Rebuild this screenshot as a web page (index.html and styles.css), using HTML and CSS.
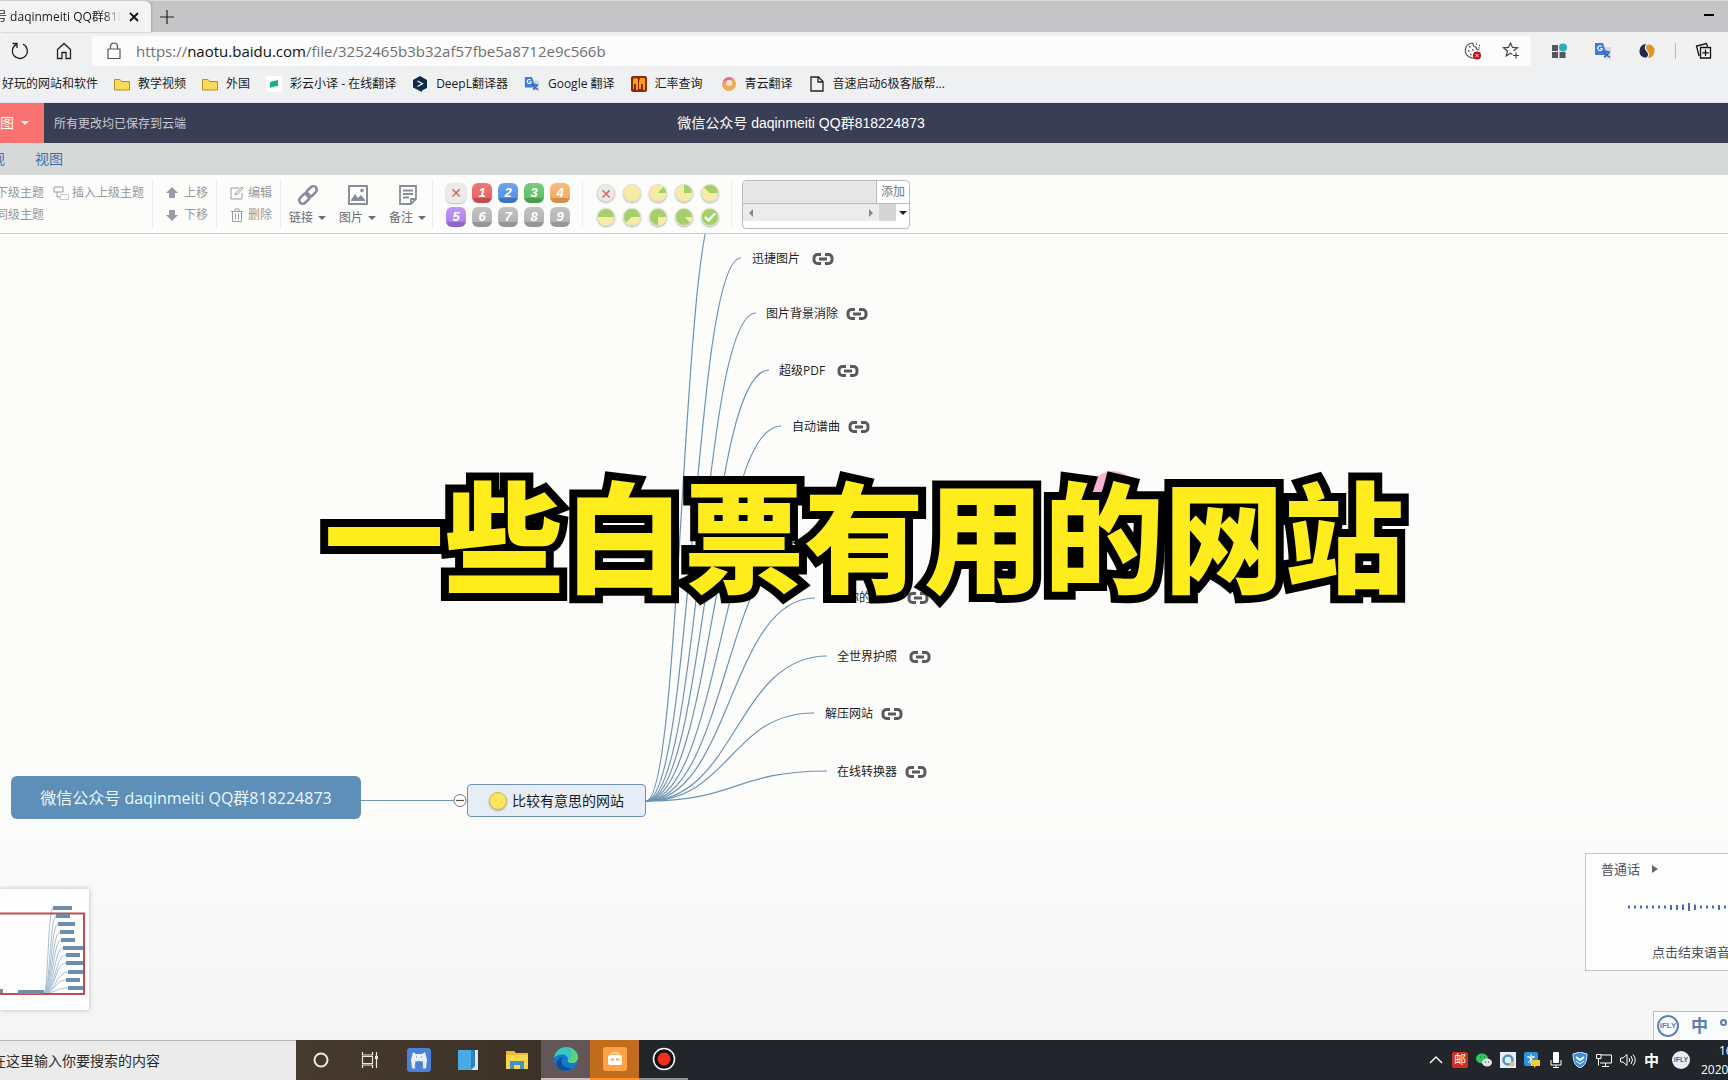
FILE: index.html
```html
<!DOCTYPE html>
<html lang="zh-CN">
<head>
<meta charset="utf-8">
<title>微信公众号 daqinmeiti QQ群818224873</title>
<link rel="stylesheet" href="styles.css">
</head>
<body>
<svg class="defs" aria-hidden="true">
  <symbol id="i-link" viewBox="0 0 22 12"><path d="M9 1.500H5.500A3.500 3.500 0 0 0 2 5v2a3.500 3.500 0 0 0 3.500 3.500H9M13 1.500h3.500A3.500 3.500 0 0 1 20 5v2a3.500 3.500 0 0 1-3.500 3.500H13M7 6h8" fill="none" stroke="#5a5a5c" stroke-width="3"/></symbol>
  <symbol id="i-folder" viewBox="0 0 16 16"><path d="M.5 3.500h5.500l1.500 2h8v8.500H.5z" fill="#fbd95b" stroke="#b78f1e"/></symbol>
  <symbol id="i-gt" viewBox="0 0 18 18"><path d="M7 5h10v12h-6z" fill="#d5d8dc"/><path d="M1 1h8l4 12H1z" fill="#3f7bdc"/><path d="M8.500 6.500H6.200M8.300 6.500a2.300 2.300 0 1 1-.8-2" fill="none" stroke="#fff" stroke-width="1.200"/><path d="M9 10h7M12.500 8.500V10M15 10c-.8 2.500-3 4-5 5M11 11c1 2 3 3.500 5 4" stroke="#3765b5" stroke-width="1.500" fill="none"/></symbol>
</svg>

<header class="browser">
  <div class="tabstrip">
    <div class="tab"><span class="tab-title">号 daqinmeiti QQ群818</span>
      <button class="plain" aria-label="关闭标签页"><svg width="10" height="10" viewBox="0 0 10 10"><path d="M1 1l8 8M9 1L1 9" stroke="#111" stroke-width="1.800"/></svg></button></div>
    <button class="plain newtab" aria-label="新建标签页"><svg width="14" height="14" viewBox="0 0 14 14"><path d="M7 0v14M0 7h14" stroke="#222" stroke-width="1.200"/></svg></button>
    <button class="plain minimize" aria-label="最小化"><svg width="10" height="2"><path d="M0 1h10" stroke="#000" stroke-width="2"/></svg></button>
  </div>
  <div class="addressbar">
    <button class="plain nav-btn" aria-label="刷新"><svg width="18" height="18" viewBox="0 0 18 18"><path d="M5.500 2.300A7.500 7.500 0 1 0 12 2.200M1.500 1.500h4.500V6" fill="none" stroke="#222" stroke-width="1.300"/></svg></button>
    <button class="plain nav-btn" aria-label="主页"><svg width="16" height="18" viewBox="0 0 16 18"><path d="M1.500 7.500L8 1.500l6.500 6v9H10v-6H6v6H1.500z" fill="none" stroke="#222" stroke-width="1.300"/></svg></button>
    <div class="urlbox">
      <svg width="14" height="18" viewBox="0 0 14 18"><path d="M1 7h12v9.500H1zM3.500 7V4.500a3.500 3.500 0 0 1 7 0V7" fill="none" stroke="#555" stroke-width="1.200"/></svg>
      <a class="url" href="#">https://<b>naotu.baidu.com</b>/file/3252465b3b32af57fbe5a8712e9c566b</a>
      <button class="plain" aria-label="Cookie"><svg width="18" height="18" viewBox="0 0 18 18"><path d="M9 1a7.500 7.500 0 1 0 7 9.500M9 1c0 3 1 4 3 4 0 2 1 3 3.500 3" fill="none" stroke="#555" stroke-width="1.200"/><path d="M5 5h1.500M4 9h1.500M8 8h1.500M6 12.500h1.500M12 2h1M15 3.500h1M14.500 6h1" stroke="#555" stroke-width="1.500"/><circle cx="13" cy="13.500" r="4" fill="#c2151e"/><path d="M11.700 12.200l2.600 2.600M14.300 12.200l-2.600 2.600" stroke="#fff"/></svg></button>
      <button class="plain" aria-label="收藏"><svg width="18" height="18" viewBox="0 0 18 18"><path d="M10.500 12.500L8.500 11.300 4.200 14l1.200-5L1.500 5.800l5-.4 2-4.400 2 4.400 5 .4-3.900 3.200M14 10.500v6M11 13.500h6" fill="none" stroke="#444" stroke-width="1.200"/></svg></button>
    </div>
    <div class="extensions">
      <button class="plain" aria-label="应用"><svg width="16" height="16" viewBox="0 0 16 16"><path d="M1 2h6v6H1zM1 9h6v6H1zM8.500 9h6v6h-6z" fill="#55565b"/><circle cx="12" cy="4.500" r="4" fill="#2cabc4"/></svg></button>
      <button class="plain" aria-label="翻译"><svg width="18" height="18"><use href="#i-gt"/></svg></button>
      <button class="plain" aria-label="扩展"><svg width="16" height="16" viewBox="0 0 16 16"><path d="M7 1A7 7 0 0 0 5 14.500c4 .5 5-3 3-5.500-2.500-3-3-5-1-8z" fill="#23284e"/><path d="M9 15A7 7 0 0 0 11 1.500c-4-.5-5 3-3 5.500 2.500 3 3 5 1 8z" fill="#e19424"/></svg></button>
      <span class="vline"></span>
      <button class="plain" aria-label="集锦"><svg width="18" height="18" viewBox="0 0 18 18"><path d="M5.500 5.500h10v10.500h-10zM10.500 7.500v6.500M7.300 10.800h6.500M4 14L1.500 4l10-2.500 1 3" fill="none" stroke="#111" stroke-width="1.300"/></svg></button>
    </div>
  </div>
  <nav class="bookmarks">
    <a href="#">好玩的网站和软件</a>
    <a href="#"><svg><use href="#i-folder"/></svg>教学视频</a>
    <a href="#"><svg><use href="#i-folder"/></svg>外国</a>
    <a href="#"><svg viewBox="0 0 16 16"><rect width="16" height="16" rx="3" fill="#fff"/><path d="M4 6l8-2v6l-6 1-2 1z" fill="#19b37c"/></svg>彩云小译 - 在线翻译</a>
    <a href="#"><svg viewBox="0 0 16 16"><path d="M8 0l7 4v8l-5 2.500V16L1 11.500V4z" fill="#0f2b46"/><path d="M5.500 5l5 2.800-5 2.700" fill="none" stroke="#fff" stroke-width="1.200"/></svg>DeepL翻译器</a>
    <a href="#"><svg viewBox="0 0 18 18"><use href="#i-gt" width="18" height="18"/></svg>Google 翻译</a>
    <a href="#"><svg viewBox="0 0 16 16"><rect width="16" height="16" rx="2" fill="#8c2a05"/><path d="M2 3q3-2 5 0v11H5V8H3v5H2zM9 2h4q2 1 1 4v8h-2V8h-2v5H8V6z" fill="#ff9a1d"/></svg>汇率查询</a>
    <a class="wide" href="#"><svg viewBox="0 0 16 16"><circle cx="8" cy="8" r="7" fill="#ebab5b"/><path d="M2 5a7 7 0 0 1 11-2c-4 0-5 4-11 2z" fill="#df6d9e"/><circle cx="8" cy="7" r="3" fill="#f9e4ce"/></svg>青云翻译</a>
    <a href="#"><svg viewBox="0 0 16 16"><path d="M2 1h7.500L14 5.500V15H2zM9 1v5h5" fill="none" stroke="#222" stroke-width="1.300"/></svg>音速启动6极客版帮...</a>
  </nav>
</header>

<div class="appbar">
  <button class="menu-btn">脑图<i class="caret"></i></button>
  <span class="saved">所有更改均已保存到云端</span>
  <h1>微信公众号 daqinmeiti QQ群818224873</h1>
</div>
<nav class="app-tabs"><a href="#">外观</a><a href="#">视图</a></nav>

<div class="ribbon">
  <div class="group topics">
    <div class="stack"><button class="tool">下级主题</button><button class="tool">同级主题</button></div>
    <button class="tool"><svg width="16" height="14" viewBox="0 0 16 14"><path d="M1 1h9v5H1zM4 6v5h3" fill="none" stroke="#999ca3"/><path d="M7.500 8.500h8v5h-8z" fill="none" stroke="#999ca3" stroke-dasharray="1 1"/></svg>插入上级主题</button>
  </div>
  <div class="group stack moves">
    <button class="tool"><svg width="12" height="12" viewBox="0 0 12 12"><path d="M6 0l6 6H9v5H3V6H0z" fill="#999ca6"/></svg>上移</button>
    <button class="tool"><svg width="12" height="12" viewBox="0 0 12 12"><path d="M6 12l6-6H9V1H3v5H0z" fill="#999ca6"/></svg>下移</button>
  </div>
  <div class="group stack edits">
    <button class="tool"><svg width="14" height="14" viewBox="0 0 14 14"><path d="M9 2H1v11h11V7M5 9l1-2.500L12 1l1 1-5.500 6z" fill="none" stroke="#999ca3"/></svg>编辑</button>
    <button class="tool"><svg width="14" height="14" viewBox="0 0 14 14"><path d="M1 3.500h12M5 3V1h4v2M2.500 3.500v10h9v-10M5.500 5.500v6M8.500 5.500v6" fill="none" stroke="#999ca3"/></svg>删除</button>
  </div>
  <div class="group bigs">
    <button class="big"><svg width="22" height="22" viewBox="0 0 22 22"><g fill="none" stroke="#8a8e99" stroke-width="2.600" transform="rotate(-45 11 11)"><rect x="0" y="7.500" width="12" height="7" rx="3.500"/><rect x="10" y="7.500" width="12" height="7" rx="3.500"/></g></svg><span>链接<i class="caret"></i></span></button>
    <button class="big"><svg width="22" height="22" viewBox="0 0 22 22"><path d="M2 2h18v18H2z" fill="none" stroke="#8a8e99" stroke-width="2"/><path d="M4 16l4-6 3 4 3-3 4 5v1H4z" fill="#8a8e99"/><circle cx="15" cy="6.500" r="1.800" fill="#8a8e99"/></svg><span>图片<i class="caret"></i></span></button>
    <button class="big"><svg width="22" height="22" viewBox="0 0 22 22"><path d="M3 2h16v13l-5 5H3zM14 20v-5h5M6 6.500h10M6 10h10M6 13.500h6" fill="none" stroke="#8a8e99" stroke-width="1.800"/></svg><span>备注<i class="caret"></i></span></button>
  </div>
  <div class="group marks">
    <button class="pri none" aria-label="移除优先级">✕</button><button class="pri c1">1</button><button class="pri c2">2</button><button class="pri c3">3</button><button class="pri c4">4</button>
    <button class="pri c5">5</button><button class="pri">6</button><button class="pri">7</button><button class="pri">8</button><button class="pri">9</button>
  </div>
  <div class="group marks progress">
    <button class="prog none" aria-label="移除进度">✕</button><button class="prog p0" aria-label="未开始"></button><button class="prog p1" aria-label="1/8"></button><button class="prog p2" aria-label="2/8"></button><button class="prog p3" aria-label="3/8"></button>
    <button class="prog p4" aria-label="4/8"></button><button class="prog p5" aria-label="5/8"></button><button class="prog p6" aria-label="6/8"></button><button class="prog p7" aria-label="7/8"></button><button class="prog p8" aria-label="完成"><svg width="12" height="10" viewBox="0 0 12 10"><path d="M1 5l3.500 3.500L11 1.500" fill="none" stroke="#fff" stroke-width="2.400"/></svg></button>
  </div>
  <div class="resource">
    <div class="res-add"><input type="text" aria-label="资源"><button>添加</button></div>
    <div class="res-list"><div class="scroller"><i class="left"></i><i class="right"></i></div><span class="corner"></span><button class="plain" aria-label="展开"><i class="caret"></i></button></div>
  </div>
</div>

<main class="canvas">
  <svg class="edges" width="1000" height="806" viewBox="0 234 1000 806" aria-hidden="true">
    <g fill="none" stroke="#6e93b3" stroke-width="1.200">
      <path d="M646 801C682 801 682 200 719 200"/>
      <path d="M646 801C693 801 693 258 741 258"/>
      <path d="M646 801C701 801 701 313 756 313"/>
      <path d="M646 801C707 801 707 370 769 370"/>
      <path d="M646 801C713 801 713 426 781 426"/>
      <path d="M646 801C720 801 720 483 795 483"/>
      <path d="M646 801C726 801 726 540 806 540"/>
      <path d="M646 801C730 801 730 598 815 598"/>
      <path d="M646 801C736 801 736 656 827 656"/>
      <path d="M646 801C730 801 730 713 814 713"/>
      <path d="M646 801C736 801 736 771 827 771"/>
      <path d="M361 800.500H454"/>
      <circle cx="460" cy="800.500" r="6" fill="#fff" stroke="#777" stroke-width="1"/><path d="M456 800.500h8" stroke="#555"/>
    </g>
  </svg>
  <div class="node root">微信公众号 daqinmeiti QQ群818224873</div>
  <div class="node topic"><i class="dot"></i>比较有意思的网站</div>
  <div class="node leaf n1">迅捷图片<svg><use href="#i-link"/></svg></div>
  <div class="node leaf tight n2">图片背景消除<svg><use href="#i-link"/></svg></div>
  <div class="node leaf n3">超级PDF<svg><use href="#i-link"/></svg></div>
  <div class="node leaf tight n4">自动谱曲<svg><use href="#i-link"/></svg></div>
  <div class="node leaf n5">根据你的照片<svg><use href="#i-link"/></svg></div>
  <div class="node leaf n6">全世界护照<svg><use href="#i-link"/></svg></div>
  <div class="node leaf tight n7">解压网站<svg><use href="#i-link"/></svg></div>
  <div class="node leaf tight n8">在线转换器<svg><use href="#i-link"/></svg></div>
  <i class="pink"></i>

  <div class="minimap">
    <svg width="89" height="121" viewBox="0 889 89 121" aria-hidden="true">
      <g fill="none" stroke="#a9c0d2"><path d="M44 993C48 993 48 908 53 908M44 993C50 993 50 916 56 916M44 993C51 993 51 924 58 924M44 993C52 993 52 932 60 932M44 993C53 993 53 940 61 940M44 993C54 993 54 948 63 948M44 993C55 993 55 955 66 955M44 993C55 993 55 963 66 963M44 993C56 993 56 972 68 972M44 993C55 993 55 980 66 980M44 993C56 993 56 988 68 988"/></g>
      <path d="M0 913.500H84V994H0" fill="none" stroke="#bf4c54" stroke-width="2"/>
      <path d="M53 906h19v4H53zM56 914h14v4H56zM58 922h17v4H58zM60 930h14v4H60zM61 938h14v4H61zM63 946h20v4H63zM66 953h14v4H66zM66 961h17v4H66zM68 970h15v4H68zM66 978h14v4H66zM68 986h15v4H68zM18 990h26v4H18zM0 989h3v4H0z" fill="#6d8fab"/>
    </svg>
  </div>

  <section class="voice">
    <div class="lang">普通话 <i class="arrow"></i></div>
    <svg class="wave" width="104" height="8" viewBox="0 0 104 8" aria-hidden="true"><path d="M1 4h98" stroke="#4d6db3" stroke-width="3" stroke-dasharray="2 4"/><path d="M44 2v5M50 2v5M56 1.500v5.500M62 0v8M68 1.500v5.500M92 2v5" stroke="#4d6db3" stroke-width="2"/></svg>
    <div class="hint">点击结束语音输入</div>
  </section>
  <div class="ime"><span class="ifly">iFLY</span><b>中</b><i class="deg"></i></div>
  <div class="caption">一些白票有用的网站</div>
</main>

<footer class="taskbar">
  <input class="search" type="text" placeholder="在这里输入你要搜索的内容" aria-label="搜索">
  <div class="apps">
    <button aria-label="Cortana"><svg width="16" height="16" viewBox="0 0 16 16"><circle cx="8" cy="8" r="6.500" fill="none" stroke="#eee9e2" stroke-width="2"/></svg></button>
    <button aria-label="任务视图"><svg width="18" height="18" viewBox="0 0 18 18"><path d="M1.500 1v3h10V1M1.500 17v-3h10v3M1.500 5.500h10v7h-10zM15.500 1v16" fill="none" stroke="#eee9e2" stroke-width="1.200"/><path d="M14 5h3v3h-3z" fill="#eee9e2"/></svg></button>
    <button aria-label="应用"><svg width="24" height="24" viewBox="0 0 24 24"><rect width="24" height="24" rx="3" fill="#4b82d8"/><path d="M6 4l3 2h6l3-2 1 4 1 4-1 8q-3 2-4-1v-5q-3-2-6 0v5q-1 3-4 1l-1-8 1-4z" fill="#e8f1fb"/><path d="M9 9h1M14 9h1M8 20l1-7M16 20l-1-7M12 15v6" stroke="#4b82d8"/></svg></button>
    <button aria-label="笔记"><svg width="22" height="22" viewBox="0 0 22 22"><path d="M1 1h13v20H1z" fill="#48abe6"/><path d="M14 1h7v20h-7z" fill="#d6e6f3"/><path d="M14 1v20l4-4V1z" fill="#2c83c4"/></svg></button>
    <button aria-label="文件资源管理器"><svg width="22" height="20" viewBox="0 0 22 20"><path d="M0 1h8l2 2h12v16H0z" fill="#e9ba35"/><path d="M0 5h22v14H0z" fill="#fbd64d"/><path d="M4 19v-8h14v8h-4v-4H8v4z" fill="#4593c3"/></svg></button>
    <button class="active" aria-label="Edge"><svg width="26" height="26" viewBox="0 0 26 26"><circle cx="13" cy="13" r="12" fill="#1678c8"/><path d="M1 12C2 5 7 1 13 1c7 0 12 5 12 10 0 4-3 6-6 6-4 0-5-2-4-4 0-4-8-7-14-1z" fill="#38c6c2"/><path d="M17 2c5 2 8 5 8 9 0 4-3 6-6 6-3 0-4-1-4-3 4-1 5-7 2-12z" fill="#5dd47a"/><path d="M10 11c-4 5 0 12 9 11-5 4-12 3-15-1-2-5 1-9 6-10z" fill="#0d4f9e"/></svg></button>
    <button class="orange" aria-label="录屏"><svg width="24" height="24" viewBox="0 0 24 24"><rect width="24" height="24" rx="3" fill="#ffa145"/><rect x="5" y="8" width="14" height="10" rx="2" fill="#fff"/><path d="M8 8l1-2h6l1 2M9 12v2M15 12v2M5 13h14" stroke="#fff" fill="none"/><path d="M8 12.500h3M13 12.500h3" stroke="#ffa145" stroke-width="2"/></svg></button>
  </div>
  <button class="rec" aria-label="录制"><svg width="24" height="24" viewBox="0 0 24 24"><circle cx="12" cy="12" r="10.500" fill="#111" stroke="#fff" stroke-width="1.500"/><circle cx="12" cy="12" r="6.500" fill="#f23020"/></svg></button>
  <div class="tray">
    <svg viewBox="0 0 16 16"><path d="M2 11l6-6 6 6" fill="none" stroke="#fff" stroke-width="1.400"/></svg>
    <span class="mail">邮</span>
    <svg viewBox="0 0 16 16"><ellipse cx="6" cy="6.500" rx="6" ry="5" fill="#2fc85e"/><ellipse cx="11" cy="10.500" rx="5" ry="4" fill="#dfe4e0"/><path d="M4 5h1M8 5h1M9 10h1M12 10h1" stroke="#333"/></svg>
    <svg viewBox="0 0 16 16"><rect width="16" height="16" fill="#e8eef4"/><circle cx="8" cy="8" r="4.500" fill="none" stroke="#4f91c5" stroke-width="2.500"/><circle cx="12" cy="12" r="2.500" fill="#d5c792"/></svg>
    <svg viewBox="0 0 16 16"><rect width="14" height="14" rx="2" fill="#2c94df"/><path d="M7 2v10M3 5h8M4 11l6-7M4 4l6 7" stroke="#fff"/><path d="M7 8h9v6h-4l-2 2v-2H7z" fill="#f6cf34"/></svg>
    <svg viewBox="0 0 16 16"><rect x="5" y="0" width="6" height="11" rx="1" fill="#fff"/><path d="M3 8v5h10V8M8 13v3M5 15.500h6" fill="none" stroke="#fff"/></svg>
    <svg viewBox="0 0 16 16"><path d="M8 0l7 2c0 7-2 12-7 14C3 14 1 9 1 2z" fill="#3d8ed8" stroke="#d9ebfa"/><path d="M4 5l4 3 4-3" fill="none" stroke="#fff" stroke-width="1.800"/><path d="M4 9l4 3 4-3" fill="none" stroke="#fff"/></svg>
    <svg viewBox="0 0 16 16"><path d="M5 3h10.500v8H4M9.500 11v3.500M6 14.500h7M.5 2.500H5v4H.5zM2.500 6.500v7" fill="none" stroke="#fff"/></svg>
    <svg viewBox="0 0 16 16"><path d="M.5 6h2.500l4-3.500v11L3 10H.5zM9 6q1.500 2 0 4M11 4q3 4 0 8M13 2.500q4.500 5.500 0 11" fill="none" stroke="#fff"/></svg>
    <b class="zh">中</b>
    <span class="fly">iFLY</span>
    <div class="clock"><span>16:20</span><span>2020/9/6</span></div>
  </div>
</footer>
</body>
</html>
```
FILE: styles.css
```css
* { box-sizing: border-box; }
body {
  margin: 0; min-height: 100vh; display: flex; flex-direction: column; overflow: hidden;
  font: 12px/16px "Open Sans", "Noto Sans CJK SC", sans-serif; color: #1c1c1c; background: #fbfbfa;
}
button, input { font: inherit; color: inherit; margin: 0; padding: 0; border: 0; background: none; }
button { white-space: nowrap; }
a { color: inherit; text-decoration: none; }
svg { display: block; flex: none; }
.defs { position: absolute; width: 0; height: 0; }
.plain { display: flex; align-items: center; justify-content: center; flex: none; }
.caret { display: inline-block; border: 4px solid transparent; border-top-color: currentColor; border-bottom: 0; }

/* browser chrome */
.browser { background: linear-gradient(#f1f1f0, #eff0f3); border-bottom: 1px solid #dfe1ec; }
.tabstrip { display: flex; height: 32px; background: #c5c5c7; border-top: 1px solid #d9d9da; }
.tab { display: flex; align-items: center; gap: 8px; width: 151px; background: #f3f3f3; border-radius: 0 6px 0 0; overflow: hidden; box-shadow: 1px 0 2px #a5a5a7; }
.tab-title { width: 121px; text-indent: -5px; white-space: nowrap; overflow: hidden; mask-image: linear-gradient(90deg, #000 86%, transparent); }
.newtab { width: 32px; }
.minimize { width: 38px; margin-left: auto; padding-bottom: 4px; }
.addressbar { display: flex; align-items: center; height: 36px; padding-top: 2px; }
.nav-btn { width: 40px; }
.nav-btn + .nav-btn { width: 48px; }
.urlbox { flex: 1; display: flex; align-items: center; gap: 20px; height: 30px; margin-left: 4px; padding: 0 11px 0 15px; background: #fcfcfc; border-radius: 4px; }
.url { flex: 1; margin-left: -5px; font-size: 15px; line-height: 20px; color: #707070; }
.url b { font-weight: 400; color: #111; }
.extensions { display: flex; align-items: center; gap: 20px; padding: 0 12px 0 16px; }
.extensions .plain { width: 24px; height: 24px; }
.vline { width: 1px; height: 16px; margin: 0 -4px; background: #bbb; }
.bookmarks { display: flex; align-items: center; gap: 16px; height: 34px; padding: 0 0 2px 2px; white-space: nowrap; overflow: hidden; }
.bookmarks a { display: flex; align-items: center; gap: 8px; }
.bookmarks svg { width: 16px; height: 16px; }
.bookmarks .wide { padding-left: 2px; }

/* editor header */
.appbar { display: grid; grid-template-columns: 44px 1fr auto 1fr; align-items: center; height: 40px; background: #3a3e54; padding-right: 170px; }
.menu-btn { display: flex; align-items: center; justify-content: flex-end; gap: 7px; height: 40px; padding-right: 15px; overflow: hidden; background: #fa7270; color: #fff; font-size: 14px; }
.saved { padding-left: 10px; padding-top: 2px; color: #c9cad2; }
.appbar h1 { margin: 0; font: 400 14px/20px "Liberation Sans", "Noto Sans CJK SC", sans-serif; color: #fff; }
.app-tabs { display: flex; align-items: center; gap: 30px; height: 32px; margin-left: -23px; background: #d7d8d8; font-size: 14px; color: #3a73ac; }

/* ribbon */
.ribbon { display: flex; height: 59px; padding-top: 5px; background: #fcfcfb; border-bottom: 1px solid #c9cbd0; color: #97989c; overflow: hidden; }
.group { display: flex; height: 49px; border-right: 1px solid #eeefef; padding: 4px 8px 0; }
.topics { align-items: flex-start; gap: 9px; margin-left: -12px; }
.topics .tool { gap: 3px; }
.tool { display: flex; align-items: center; gap: 6px; height: 18px; }
.stack { display: flex; flex-direction: column; gap: 4px; }
.moves { padding-left: 13px; }
.edits { padding-left: 13px; }
.edits .tool { gap: 4px; }
.bigs { gap: 14px; padding: 4px 7px 0 8px; color: #6b6c70; }
.big { display: flex; flex-direction: column; gap: 4px; width: 36px; align-items: flex-start; }
.big svg { margin-left: 8px; }
.big span { display: flex; align-items: center; gap: 5px; }
.marks { display: grid; grid-template-columns: repeat(5, 20px); gap: 4px 6px; align-content: start; padding: 3px 12px 0 13px; }
.pri { width: 20px; height: 20px; border-radius: 6px; background: linear-gradient(#c3c3c4, #b4b4b6 75%, #969698 76%); color: #fff; font: italic bold 13px/18px "Liberation Sans", sans-serif; }
.pri.none, .prog.none { background: #ecebeb; color: #c5696b; font: bold 14px/18px "DejaVu Sans", sans-serif; box-shadow: 0 1px 2px #bbb; }
.c1 { background: linear-gradient(#ef7676, #e96464 75%, #c94a4c 76%); }
.c2 { background: linear-gradient(#6aa4ee, #5792e6 75%, #3e73c4 76%); }
.c3 { background: linear-gradient(#76cc7c, #60c067 75%, #46a04e 76%); }
.c4 { background: linear-gradient(#f7bd7c, #f2ae62 75%, #d38f45 76%); }
.c5 { background: linear-gradient(#bd98f2, #ae85ec 75%, #8e64ce 76%); }
.progress { padding-right: 11px; }
.prog { width: 18px; height: 18px; margin: 1px; border-radius: 50%; display: grid; place-items: center; border: 1px solid #dfe0c0; box-shadow: 0 1px 2px #aaa; background: conic-gradient(from 90deg, #f6eca6 var(--rest), #a5d069 0); }
.p0 { --rest: 100%; } .p1 { --rest: 87%; } .p2 { --rest: 75%; } .p3 { --rest: 62%; } .p4 { --rest: 50%; }
.p5 { --rest: 38%; } .p6 { --rest: 25%; } .p7 { --rest: 12%; } .p8 { --rest: 0%; }
.resource { width: 168px; height: 49px; margin-left: 10px; border: 1px solid #b9bbbd; border-radius: 4px; overflow: hidden; background: #fff; }
.res-add { display: flex; height: 23px; border-bottom: 1px solid #b9bbbd; }
.res-add input { flex: 1; min-width: 0; background: #e7e7e7; border-right: 1px solid #b9bbbd; }
.res-add button { width: 32px; color: #777; }
.res-list { display: flex; height: 17px; }
.scroller { flex: 1; display: flex; justify-content: space-between; align-items: center; padding: 0 6px; background: #ececec; }
.scroller i { border: 4px solid transparent; }
.scroller .left { border-right-color: #888; border-left: 0; }
.scroller .right { border-left-color: #888; border-right: 0; }
.corner { width: 17px; background: #d3d5d6; }
.res-list button { width: 13px; color: #222; }

/* mind map */
.canvas { position: relative; flex: 1; overflow: hidden; background: linear-gradient(#fcfcfb 70%, #f5f5f6); }
.edges { position: absolute; left: 0; top: 0; }
.node { position: absolute; display: flex; align-items: center; white-space: nowrap; }
.root { left: 11px; top: 542px; width: 350px; height: 43px; justify-content: center; border-radius: 6px; background: #5e8fb8; color: #eef6fb; font-size: 16px; }
.topic { left: 467px; top: 550px; width: 179px; height: 33px; gap: 5px; padding-left: 21px; border: 1px solid #6f8fb0; border-radius: 4px; background: #e7edf4; font-size: 14px; }
.dot { width: 18px; height: 18px; border-radius: 50%; background: #fbe55f; border: 1px solid #cdb957; box-shadow: 0 1px 2px #aaa; }
.leaf { gap: 12px; height: 16px; }
.leaf.tight { gap: 8px; }
.leaf svg { width: 22px; height: 12px; }
.n1 { left: 752px; top: 17px; }
.n2 { left: 766px; top: 72px; }
.n3 { left: 779px; top: 129px; }
.n4 { left: 792px; top: 185px; }
.n5 { left: 823px; top: 356px; }
.n6 { left: 837px; top: 415px; }
.n7 { left: 825px; top: 472px; }
.n8 { left: 837px; top: 530px; }
.pink { position: absolute; left: 1087px; top: 237px; width: 52px; height: 52px; border-radius: 50%; background: #f6b3d4; }
.caption {
  position: absolute; left: 0; right: 0; top: 232px; text-align: center; white-space: nowrap;
  font: 900 120px/132px "Noto Sans CJK SC", sans-serif; color: #ffec1c;
  -webkit-text-stroke: 16px #000; paint-order: stroke fill;
}
.minimap { position: absolute; left: 0; bottom: 30px; width: 89px; height: 121px; background: #fdfdfd; box-shadow: 0 0 5px #bbb; }
.voice { position: absolute; right: 0; bottom: 69px; width: 143px; height: 118px; padding: 7px 0 0 15px; border: 1px solid #c3c5ca; border-right: 0; background: #fdfdfd; color: #4b4f5c; font-size: 13px; white-space: nowrap; overflow: hidden; }
.lang { display: flex; align-items: center; gap: 12px; }
.arrow { border: 4px solid transparent; border-left: 6px solid #666; border-right: 0; }
.wave { margin: 26px 0 0 26px; }
.hint { margin: 33px 0 0 51px; }
.ime { position: absolute; right: 0; bottom: 0; width: 75px; height: 29px; display: flex; align-items: center; gap: 12px; padding-left: 3px; border: 1px solid #b9c0cd; border-right: 0; border-bottom: 0; background: #fafbfd; color: #5c7cb8; overflow: hidden; }
.ime b { font-size: 17px; }
.ifly { flex: none; width: 22px; height: 22px; border: 2px solid #6181bd; border-radius: 50%; text-align: center; font: bold 8px/18px "Liberation Sans", sans-serif; }
.deg { flex: none; width: 7px; height: 7px; margin-bottom: 8px; border: 2px solid #5c7cb8; border-radius: 50%; }

/* taskbar */
.taskbar { display: flex; height: 40px; background: #22262a; color: #fff; overflow: hidden; }
.search { width: 296px; background: #ebebeb; border-top: 1px solid #b5b5b5; text-indent: -8px; font-size: 14px; color: #2b2b2b; }
.search::placeholder { color: #2b2b2b; opacity: 1; }
.apps { display: flex; background: linear-gradient(90deg, #453a2c, #3b2f26); }
.taskbar button { width: 49px; height: 40px; display: grid; place-items: center; }
.taskbar .active { background: #625656; border-bottom: 2px solid #cdbdbd; }
.taskbar .orange { background: #c26d1e; border-bottom: 2px solid #ff9326; }
.taskbar .rec { border-bottom: 2px solid #8f9294; }
.tray { margin-left: auto; display: flex; align-items: center; gap: 8px; }
.tray > svg { width: 16px; height: 16px; }
.mail { width: 16px; border-radius: 2px; background: #d62d22; text-align: center; }
.zh { width: 16px; font-size: 15px; }
.fly { width: 18px; height: 18px; margin-left: 4px; border-radius: 50%; background: #e9edf5; color: #44609c; text-align: center; font: bold 7px/18px "Liberation Sans", sans-serif; }
.clock { display: flex; flex-direction: column; align-items: flex-start; gap: 3px; width: 27px; margin-left: 3px; white-space: nowrap; }
.clock span:first-child { padding-left: 18px; }
```
